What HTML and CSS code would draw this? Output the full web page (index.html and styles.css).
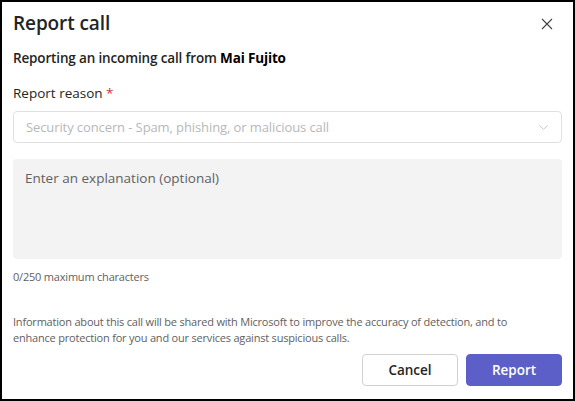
FILE: index.html
```html
<!DOCTYPE html>
<html lang="en">
<head>
<meta charset="utf-8">
<title>Report call</title>
<link rel="stylesheet" href="styles.css">
</head>
<body>
<div class="dialog">
  <div class="header">
    <h1 class="title">Report call</h1>
    <button class="close" aria-label="Close">
      <svg width="12" height="12" viewBox="0 0 12 12"><path d="M1 1 L11 11 M11 1 L1 11" stroke="#424242" stroke-width="1.1" fill="none"/></svg>
    </button>
  </div>
  <p class="subtitle">Reporting an incoming call from <b>Mai Fujito</b></p>
  <label class="label">Report reason <span class="req">*</span></label>
  <div class="select">
    <span class="placeholder">Security concern - Spam, phishing, or malicious call</span>
    <svg class="chev" width="9" height="5" viewBox="0 0 9 5"><path d="M0.4 0.4 L4.5 4.4 L8.6 0.4" stroke="#c8c8c8" stroke-width="1" fill="none"/></svg>
  </div>
  <div class="textarea">Enter an explanation (optional)</div>
  <p class="count">0/250 maximum characters</p>
  <p class="info">Information about this call will be shared with Microsoft to improve the accuracy of detection, and to enhance protection for you and our services against suspicious calls.</p>
  <div class="actions">
    <button class="btn secondary">Cancel</button>
    <button class="btn primary">Report</button>
  </div>
</div>
</body>
</html>
```
FILE: styles.css
```css
* { box-sizing: border-box; }
html, body { margin: 0; padding: 0; background: #fff; }
body { font-family: "Open Sans", "Noto Sans", sans-serif; color: #242424; }
.dialog {
  width: 575px;
  height: 401px;
  border: 2px solid #000;
  padding: 0 11px 0 11px;
  display: flex;
  flex-direction: column;
}
.header {
  display: flex;
  justify-content: space-between;
  align-items: center;
  height: 42px;
}
.title {
  margin: 0;
  font-size: 19px;
  font-weight: 600;
  color: #242424;
  letter-spacing: -0.1px;
}
.close {
  border: 0;
  background: none;
  padding: 0;
  width: 12px;
  height: 12px;
  margin-right: 9px;
  margin-top: 2px;
  display: flex;
}
.subtitle {
  margin: 4px 0 0 0;
  font-size: 13.5px;
  font-weight: 600;
  color: #242424;
  line-height: 20px;
  letter-spacing: -0.15px;
}
.subtitle b { font-weight: 700; color: #000; }
.label {
  margin-top: 15px;
  font-size: 13.5px;
  line-height: 20px;
  color: #242424;
}
.req { color: #c4314b; }
.select {
  margin-top: 8px;
  height: 32px;
  border: 1px solid #e0e0e0;
  border-radius: 4px;
  display: flex;
  align-items: center;
  justify-content: space-between;
  padding: 0 12px 0 12px;
}
.placeholder { font-size: 13px; color: #b8b8b8; letter-spacing: -0.1px; }
.chev { margin-top: 1px; margin-right: 1px; }
.textarea {
  margin-top: 16px;
  height: 100px;
  background: #f3f3f3;
  border-radius: 4px;
  padding: 9px 12px;
  font-size: 13.5px;
  line-height: 20px;
  color: #616161;
}
.count {
  margin: 10px 0 0 0;
  font-size: 11px;
  line-height: 16px;
  color: #616161;
  letter-spacing: -0.2px;
}
.info {
  margin: 29px 0 0 0;
  padding-right: 30px;
  font-size: 11px;
  line-height: 16px;
  color: #616161;
  letter-spacing: -0.2px;
}
.actions {
  margin-top: 8px;
  display: flex;
  justify-content: flex-end;
  gap: 8px;
}
.btn {
  width: 96px;
  height: 32px;
  border-radius: 4px;
  font-family: inherit;
  font-size: 13.5px;
  font-weight: 600;
  padding: 0;
}
.secondary { background: #fff; border: 1px solid #d1d1d1; color: #242424; }
.primary { background: #5b5fc7; border: 1px solid #5b5fc7; color: #fff; }
```
